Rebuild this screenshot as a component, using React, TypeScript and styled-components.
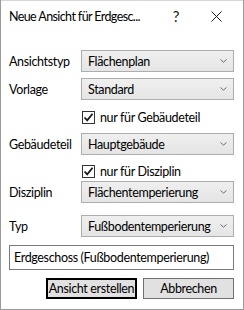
import * as React from 'react';
import styled, { createGlobalStyle } from 'styled-components';

const GlobalStyle = createGlobalStyle`
  html, body {
    margin: 0;
    padding: 0;
    background: #ffffff;
  }
  * {
    box-sizing: border-box;
  }
`;

type Field = {
  label: string,
  value: string,
  gap: number,
};

const Chevron = () => (
  <svg width="7" height="4" viewBox="0 0 7 4">
    <path d="M0.5 0.5 L3.5 3.2 L6.5 0.5" fill="none" stroke="#6b6b6b" strokeWidth="1" />
  </svg>
);

const Check = () => (
  <svg width="11" height="11" viewBox="0 0 11 11">
    <path d="M1.5 5.5 L4.2 8.4 L9.6 1.8" fill="none" stroke="#1a1a1a" strokeWidth="1.8" />
  </svg>
);

const Combo = ({ value }) => (
  <ComboBox>
    <ComboText>{value}</ComboText>
    <Chevron />
  </ComboBox>
);

const CheckRow = ({ label, gap }) => (
  <CheckLine $gap={gap}>
    <CheckBox>
      <Check />
    </CheckBox>
    <span>{label}</span>
  </CheckLine>
);

export default function App() {
  const ansicht: Field = { label: 'Ansichtstyp', value: 'Flächenplan', gap: 19 };
  const vorlage: Field = { label: 'Vorlage', value: 'Standard', gap: 6 };
  const teil: Field = { label: 'Gebäudeteil', value: 'Hauptgebäude', gap: 8 };
  const disziplin: Field = { label: 'Disziplin', value: 'Flächentemperierung', gap: 2 };
  const typ: Field = { label: 'Typ', value: 'Fußbodentemperierung', gap: 12 };

  const row = (f: Field) => (
    <Row $gap={f.gap}>
      <Label>{f.label}</Label>
      <Combo value={f.value} />
    </Row>
  );

  return (
    <>
      <GlobalStyle />
      <Window>
        <TitleBar>
          <Title>Neue Ansicht für Erdgesc...</Title>
          <TitleButton>?</TitleButton>
          <TitleButton>
            <svg width="11" height="11" viewBox="0 0 11 11">
              <path d="M0.5 0.5 L10.5 10.5 M10.5 0.5 L0.5 10.5" stroke="#1a1a1a" strokeWidth="1" />
            </svg>
          </TitleButton>
        </TitleBar>

        <Body>
          {row(ansicht)}
          {row(vorlage)}
          <CheckRow label="nur für Gebäudeteil" gap={10} />
          {row(teil)}
          <CheckRow label="nur für Disziplin" gap={9} />
          {row(disziplin)}
          {row(typ)}
          <NameInput>Erdgeschoss (Fußbodentemperierung)</NameInput>
          <Buttons>
            <Button $primary>Ansicht erstellen</Button>
            <Button>Abbrechen</Button>
          </Buttons>
        </Body>
      </Window>
    </>
  );
}

const Window = styled.div`
  width: 244px;
  height: 310px;
  border: 1px solid #9a9a9a;
  border-top: none;
  background: #ffffff;
  display: flex;
  flex-direction: column;
  font-family: Lato, "Open Sans", sans-serif;
  font-size: 12.5px;
  letter-spacing: -0.35px;
  color: #000000;
`;

const TitleBar = styled.div`
  height: 31px;
  display: flex;
  align-items: center;
  padding: 0 7px 0 8px;
  border-top: 1px solid #d6d6d6;
`;

const Title = styled.span`
  flex: 1;
  color: #000000;
  white-space: nowrap;
  letter-spacing: -0.6px;
`;

const TitleButton = styled.span`
  width: 40px;
  height: 30px;
  display: flex;
  align-items: center;
  justify-content: center;
  font-size: 15px;
  color: #1a1a1a;
`;

const Body = styled.div`
  display: flex;
  flex-direction: column;
  padding: 0 9px 0 8px;
`;

const Row = styled.div<{ $gap: number }>`
  display: grid;
  grid-template-columns: 72px 1fr;
  align-items: center;
  margin-top: ${p => p.$gap}px;
`;

const Label = styled.span`
  white-space: nowrap;
`;

const ComboBox = styled.div`
  height: 22px;
  display: flex;
  align-items: center;
  justify-content: space-between;
  padding: 0 6px 0 6px;
  background: linear-gradient(#efefef, #e5e5e5);
  border: 1px solid #adadad;
`;

const ComboText = styled.span`
  white-space: nowrap;
`;

const CheckLine = styled.div<{ $gap: number }>`
  display: flex;
  align-items: center;
  gap: 5px;
  margin-top: ${p => p.$gap}px;
  padding-left: 73px;
  height: 15px;
`;

const CheckBox = styled.span`
  width: 13px;
  height: 13px;
  border: 1px solid #333333;
  background: #ffffff;
  display: flex;
  align-items: center;
  justify-content: center;
`;

const NameInput = styled.div`
  margin-top: 8px;
  height: 25px;
  display: flex;
  align-items: center;
  padding: 0 4px;
  border: 1px solid #7a7a7a;
  white-space: nowrap;
  overflow: hidden;
`;

const Buttons = styled.div`
  display: flex;
  justify-content: flex-end;
  gap: 6px;
  margin-top: 8px;
`;

const Button = styled.div<{ $primary?: boolean }>`
  width: 91px;
  height: 21px;
  display: flex;
  align-items: center;
  justify-content: center;
  background: #e1e1e1;
  border: ${p => (p.$primary ? '2px solid #000000' : '1px solid #707070')};
  white-space: nowrap;
`;
